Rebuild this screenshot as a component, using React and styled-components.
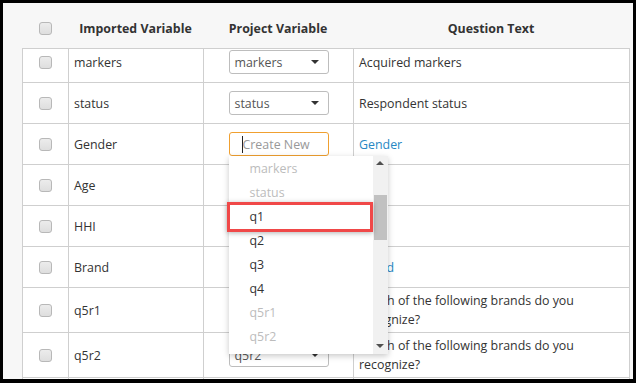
import styled, { createGlobalStyle } from "styled-components";
import { useLayoutEffect, useRef } from "react";

const GlobalStyle = createGlobalStyle`
  html, body {
    margin: 0;
    background: #000;
  }
  body {
    padding: 3px 3px 4px 3px;
    font-family: "Open Sans", "Liberation Sans", sans-serif;
    font-size: 12.4px;
    color: #333;
  }
`;

const COLUMNS = "46px 135px 150px 276px";

const Panel = styled.div`
  width: 630px;
  height: 376px;
  box-sizing: border-box;
  background: #f7f7f7;
  padding-left: 19px;
  display: flex;
  flex-direction: column;
`;

const HeaderRow = styled.div`
  display: grid;
  grid-template-columns: ${COLUMNS};
  height: 45px;
  box-sizing: border-box;
  padding-top: 5px;
  align-items: center;
  font-weight: 700;
  color: #333;
`;

const HeadCell = styled.div`
  display: flex;
  justify-content: center;
  align-items: center;
`;

const Body = styled.div`
  width: 608px;
  box-sizing: border-box;
  border-top: 1px solid #cfcfcf;
  flex: 1;
  overflow: hidden;
  background: #fff;
`;

const Row = styled.div`
  display: grid;
  grid-template-columns: ${COLUMNS};
  width: 608px;
  box-sizing: border-box;
  min-height: ${(p) => (p.$tall ? 45 : 41)}px;
  border-bottom: 1px solid #cfcfcf;
  border-right: 1px solid #cfcfcf;
`;

const Cell = styled.div`
  border-left: 1px solid #cfcfcf;
  display: flex;
  align-items: center;
  justify-content: ${(p) => p.$align || "flex-start"};
  padding: ${(p) => p.$pad || "0"};
  line-height: 19px;
  position: relative;
`;

const Checkbox = styled.span`
  display: inline-block;
  width: 13px;
  height: 13px;
  box-sizing: border-box;
  border: 1px solid #b8b8b8;
  border-radius: 3px;
  background: linear-gradient(#ececec, #dedede);
`;

const Select = styled.div`
  width: 100px;
  height: 24px;
  box-sizing: border-box;
  border: 1px solid #bdbdbd;
  border-radius: 3px;
  display: flex;
  align-items: center;
  justify-content: space-between;
  padding: 0 9px 0 5px;
  color: #555;
  background: #fff;
`;

const Caret = styled.span`
  width: 0;
  height: 0;
  border-left: 4px solid transparent;
  border-right: 4px solid transparent;
  border-top: 4px solid #333;
`;

const Combo = styled.div`
  position: relative;
  width: 100px;
`;

const Input = styled.div`
  width: 100px;
  height: 24px;
  box-sizing: border-box;
  border: 1px solid #f0a030;
  border-radius: 3px;
  display: flex;
  align-items: center;
  padding-left: 12px;
  color: #999;
  background: #fff;
`;

const TextCaret = styled.span`
  width: 1px;
  height: 17px;
  background: #222;
`;

const Menu = styled.div`
  position: absolute;
  top: 100%;
  left: 0;
  width: 159px;
  height: 198px;
  background: #fff;
  box-shadow: 0 2px 6px rgba(0, 0, 0, 0.22);
  display: flex;
  z-index: 5;
`;

const MenuList = styled.div`
  flex: 1;
  padding-top: 1px;
  position: relative;
`;

const MenuItem = styled.div`
  height: 24px;
  line-height: 24px;
  padding-left: 21px;
  color: ${(p) => (p.$used ? "#bcbcbc" : "#333")};
`;

const Highlight = styled.div`
  position: absolute;
  left: -2px;
  top: 46px;
  width: 146px;
  height: 30px;
  box-sizing: border-box;
  border: 3px solid #f04848;
  box-shadow: 0 1px 5px rgba(0, 0, 0, 0.3);
`;

const Scrollbar = styled.div`
  width: 15px;
  background: #f1f1f1;
  display: flex;
  flex-direction: column;
  align-items: center;
  padding: 5px 0 6px;
  box-sizing: border-box;
`;

const Arrow = styled.span`
  width: 0;
  height: 0;
  border-left: 4px solid transparent;
  border-right: 4px solid transparent;
  ${(p) =>
    p.$up ? "border-bottom: 4px solid #505050;" : "border-top: 4px solid #505050;"}
`;

const Thumb = styled.div`
  width: 13px;
  height: 45px;
  background: #c1c1c1;
  margin-top: 30px;
  margin-bottom: auto;
`;

const Link = styled.span`
  color: #2888c4;
`;

const rows = [
  { name: "markers", value: "markers", question: "Acquired markers" },
  { name: "status", value: "status", question: "Respondent status" },
  { name: "Gender", open: true, question: "Gender", link: true },
  { name: "Age", value: "Age", question: "" },
  { name: "HHI", value: "HHI", question: "" },
  { name: "Brand", value: "Brand", question: "Brand", link: true },
  { name: "q5r1", value: "q5r1", question: "Which of the following brands do you recognize?", tall: true },
  { name: "q5r2", value: "q5r2", question: "Which of the following brands do you recognize?", tall: true },
  { name: "", value: "", question: "", filler: true },
];

const options = [
  { label: "markers", used: true },
  { label: "status", used: true },
  { label: "q1" },
  { label: "q2" },
  { label: "q3" },
  { label: "q4" },
  { label: "q5r1", used: true },
  { label: "q5r2", used: true },
];

function Dropdown() {
  return (
    <Menu>
      <MenuList>
        {options.map((o) => (
          <MenuItem key={o.label} $used={o.used}>
            {o.label}
          </MenuItem>
        ))}
        <Highlight />
      </MenuList>
      <Scrollbar>
        <Arrow $up />
        <Thumb />
        <Arrow />
      </Scrollbar>
    </Menu>
  );
}

export default function App() {
  const bodyRef = useRef(null);

  useLayoutEffect(() => {
    if (bodyRef.current) bodyRef.current.scrollTop = 7;
  }, []);

  return (
    <>
      <GlobalStyle />
      <Panel>
        <HeaderRow>
          <HeadCell>
            <Checkbox />
          </HeadCell>
          <HeadCell>Imported Variable</HeadCell>
          <HeadCell>Project Variable</HeadCell>
          <HeadCell>Question Text</HeadCell>
        </HeaderRow>
        <Body ref={bodyRef}>
          {rows.map((r, i) => (
            <Row key={i} $tall={r.tall}>
              <Cell $align="center">{!r.filler && <Checkbox />}</Cell>
              <Cell $pad="0 5px">{r.name}</Cell>
              <Cell $align="center">
                {r.filler ? null : r.open ? (
                  <Combo>
                    <Input>
                      <TextCaret />
                      Create New
                    </Input>
                    <Dropdown />
                  </Combo>
                ) : (
                  <Select>
                    {r.value}
                    <Caret />
                  </Select>
                )}
              </Cell>
              <Cell $pad="3px 20px 3px 5px">
                {r.link ? <Link>{r.question}</Link> : r.question}
              </Cell>
            </Row>
          ))}
        </Body>
      </Panel>
    </>
  );
}
